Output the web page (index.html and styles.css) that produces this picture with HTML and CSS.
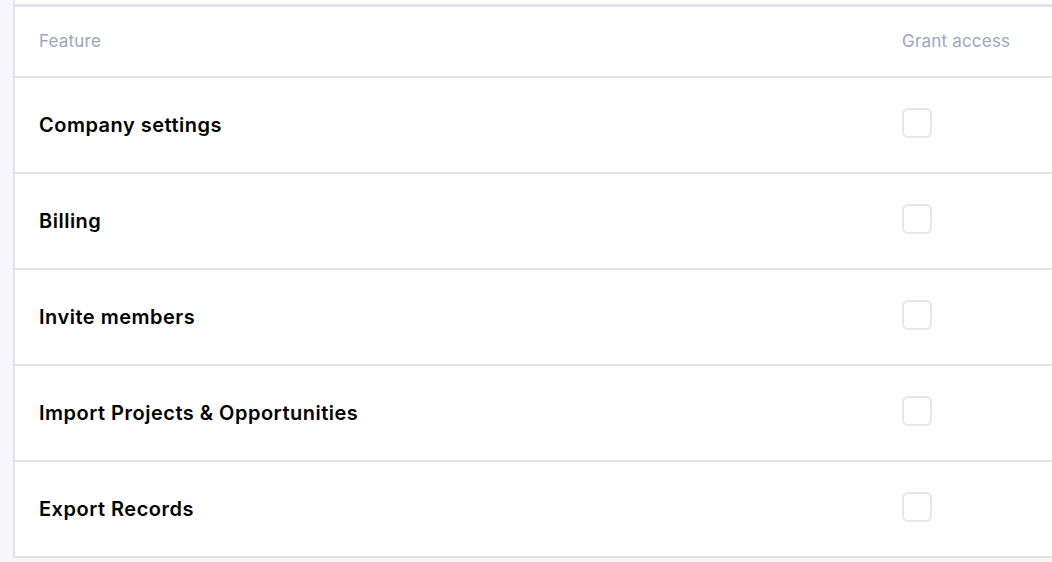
FILE: index.html
```html
<!DOCTYPE html>
<html lang="en">
<head>
    <meta charset="UTF-8">
    <meta name="viewport" content="width=device-width, initial-scale=1.0">
    <title>Permissions</title>
    <link rel="stylesheet" href="styles.css">
</head>
<body>

<div class="page">
    <div class="card">
        <div class="perm-table">
            <div class="row head">
                <div class="cell feature">Feature</div>
                <div class="cell access">Grant access</div>
            </div>
            <div class="row">
                <div class="cell feature">Company settings</div>
                <div class="cell access"><span class="check"></span></div>
            </div>
            <div class="row">
                <div class="cell feature">Billing</div>
                <div class="cell access"><span class="check"></span></div>
            </div>
            <div class="row">
                <div class="cell feature">Invite members</div>
                <div class="cell access"><span class="check"></span></div>
            </div>
            <div class="row">
                <div class="cell feature">Import Projects &amp; Opportunities</div>
                <div class="cell access"><span class="check"></span></div>
            </div>
            <div class="row">
                <div class="cell feature">Export Records</div>
                <div class="cell access"><span class="check"></span></div>
            </div>
        </div>
    </div>
</div>

</body>
</html>
```

FILE: styles.css
```css
body {
    margin: 0;
    padding: 0;
    background-color: #f7f7fb;
    font-family: Inter, "Noto Sans", sans-serif;
    color: #000;
    overflow: hidden;
}

.page {
    padding-left: 13px;
}

.card {
    width: 1100px;
    background-color: white;
    border-left: 2px solid #e2e2ea;
    padding-top: 4px;
}

.perm-table {
    border-top: 3px solid #e2e2ea;
}

.row {
    display: grid;
    grid-template-columns: 863px auto;
    align-items: center;
    height: 94px;
    padding-left: 24px;
    border-bottom: 2px solid #e2e2ea;
}

.row.head {
    height: 69px;
}

.head .cell {
    font-size: 17px;
    font-weight: 400;
    letter-spacing: 0.2px;
    color: #9ba6b9;
    padding-bottom: 2px;
}

.feature {
    font-size: 20px;
    font-weight: 600;
    letter-spacing: 0.5px;
}

.access {
    display: flex;
    align-items: center;
}

.check {
    display: block;
    width: 26px;
    height: 26px;
    border: 2px solid #e6e6ee;
    border-radius: 6px;
    margin-top: -5px;
}
```
